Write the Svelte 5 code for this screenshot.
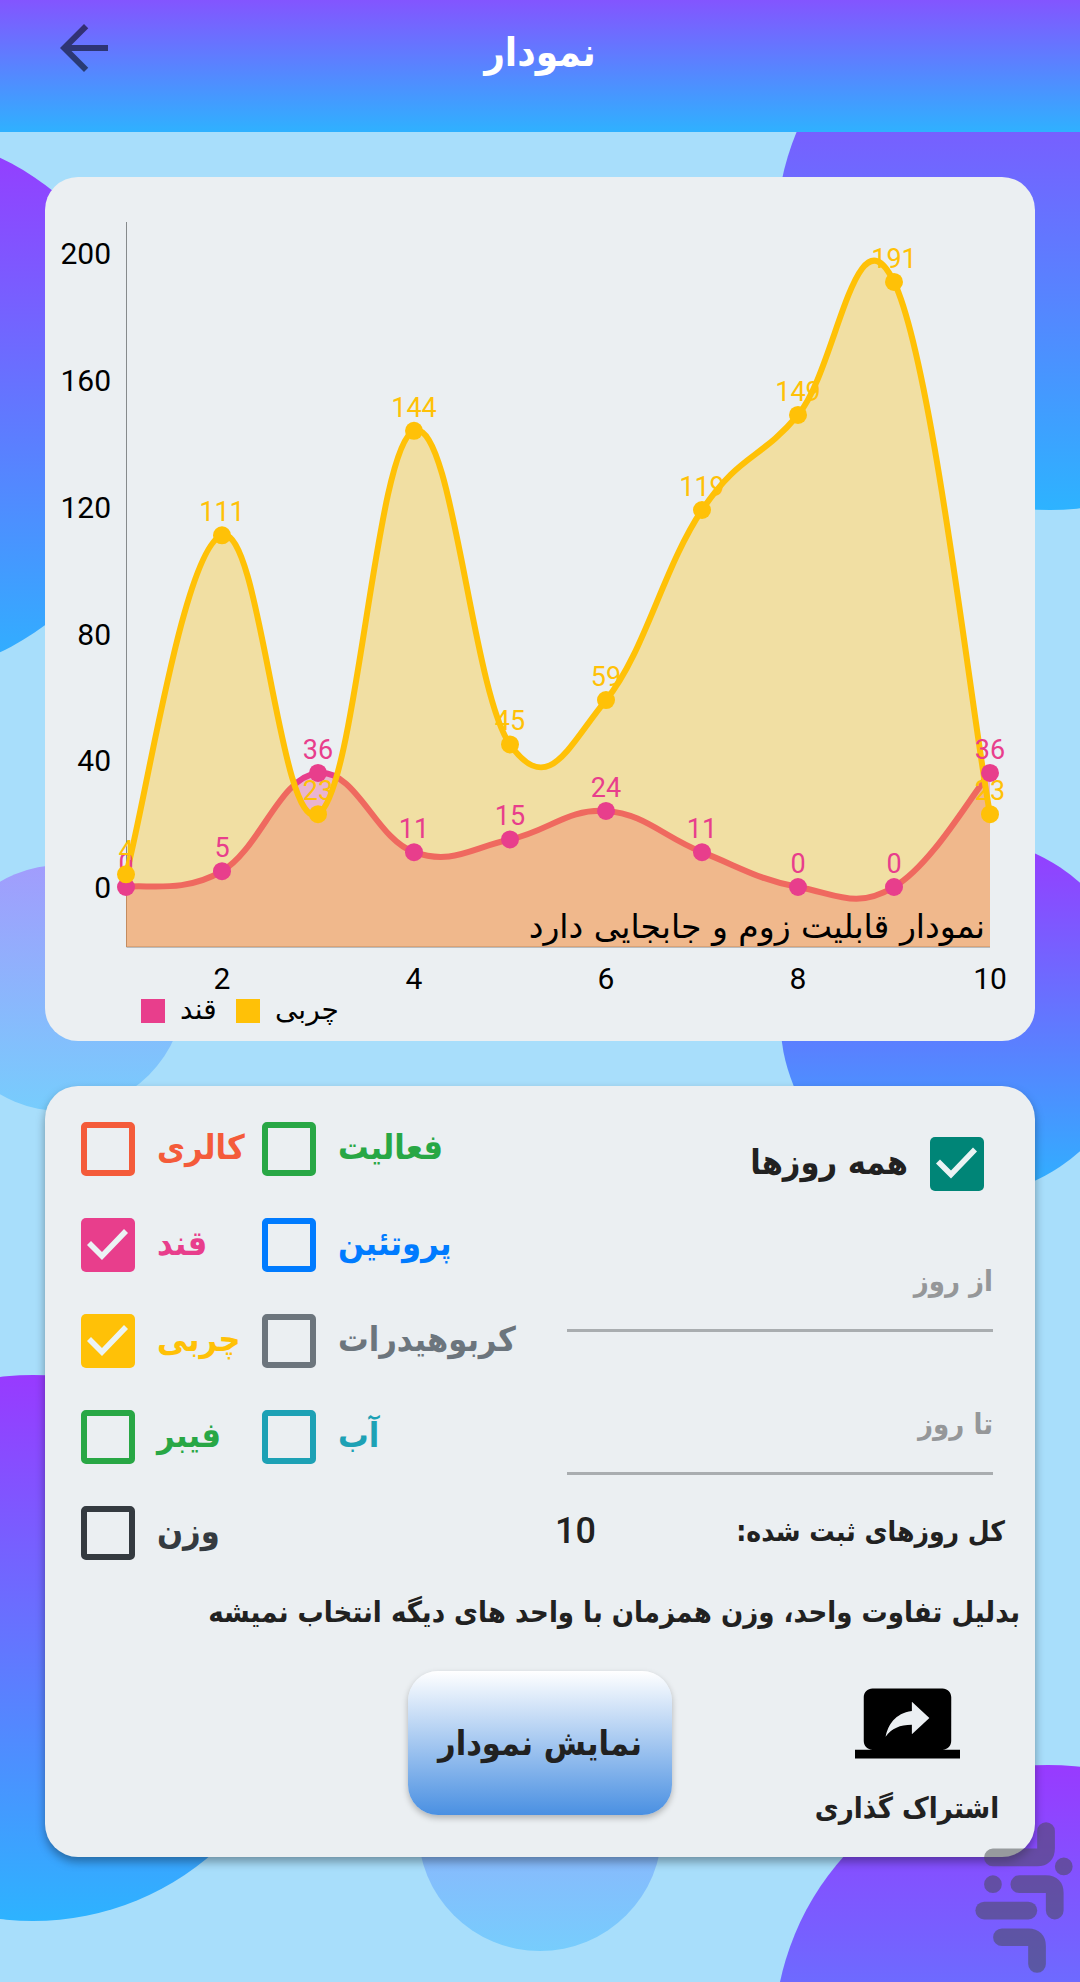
<script>
	let nutrients = $state([
		{ id: 'calorie', label: 'کالری', color: '#f45b3a', checked: false },
		{ id: 'activity', label: 'فعالیت', color: '#28a745', checked: false },
		{ id: 'sugar', label: 'قند', color: '#e83e8c', checked: true },
		{ id: 'protein', label: 'پروتئین', color: '#007bff', checked: false },
		{ id: 'fat', label: 'چربی', color: '#ffc107', checked: true },
		{ id: 'carbs', label: 'کربوهیدرات', color: '#6c757d', checked: false },
		{ id: 'fiber', label: 'فیبر', color: '#28a745', checked: false },
		{ id: 'water', label: 'آب', color: '#1da1b5', checked: false },
		{ id: 'weight', label: 'وزن', color: '#343a40', checked: false }
	]);
	let allDays = $state(true);
	let fromDay = $state('');
	let toDay = $state('');

	const series = [
		{ name: 'قند', color: '#e83e8c', values: [0, 5, 36, 11, 15, 24, 11, 0, 0, 36], legendX: 96 },
		{ name: 'چربی', color: '#ffc107', values: [4, 111, 23, 144, 45, 59, 119, 149, 191, 23], legendX: 191 }
	];

	// plot area inside the 990 x 864 viewBox
	const left = 81;
	const right = 945;
	const top = 45;
	const bottom = 770;
	const zero = 710;
	const unit = 3.168;

	const yTicks = [0, 40, 80, 120, 160, 200];
	const xTicks = [2, 4, 6, 8, 10];

	const px = (day) => left + (day - 1) * 96;
	const py = (value) => zero - value * unit;

	// cubic line, every point pulls its handles towards its neighbours
	function linePath(values) {
		const p = values.map((v, i) => [px(i + 1), py(v)]);
		const at = (i) => p[Math.max(0, Math.min(p.length - 1, i))];
		const slope = (i) => [(at(i + 1)[0] - at(i - 1)[0]) * 0.2, (at(i + 1)[1] - at(i - 1)[1]) * 0.2];
		let d = `M${p[0]}`;
		for (let i = 1; i < p.length; i++) {
			const a = slope(i - 1);
			const b = slope(i);
			d += `C${p[i - 1][0] + a[0]},${p[i - 1][1] + a[1]} ${p[i][0] - b[0]},${p[i][1] - b[1]} ${p[i]}`;
		}
		return d;
	}
</script>

<div class="page">
	<svg class="backdrop" viewBox="0 0 1080 1982" preserveAspectRatio="xMidYMin slice" aria-hidden="true">
		<defs>
			<linearGradient id="bubble" x1="0" y1="0" x2="0" y2="1">
				<stop offset="0" stop-color="#983aff" />
				<stop offset="1" stop-color="#2db3ff" />
			</linearGradient>
		</defs>
		<g fill="url(#bubble)">
			<circle cx="-118" cy="405" r="274" />
			<circle cx="1050" cy="236" r="274" />
			<circle cx="62" cy="988" r="123" opacity="0.4" />
			<circle cx="960" cy="1017" r="180" />
			<circle cx="33" cy="1648" r="273" />
			<circle cx="540" cy="1829" r="122" opacity="0.4" />
			<circle cx="1048" cy="2039" r="274" />
		</g>
	</svg>

	<header>
		<button class="back" aria-label="بازگشت">
			<svg viewBox="0 0 24 24"><path d="M20 11H7.83l5.59-5.59L12 4l-8 8 8 8 1.41-1.41L7.83 13H20v-2z" /></svg>
		</button>
		<h1>نمودار</h1>
	</header>

	<main>
		<section class="card">
			<svg class="chart" viewBox="0 0 990 864" role="img" aria-label="نمودار">
				<path class="axis" d="M{left + 0.5} {top}V{bottom}H{right}" />

				{#each series as s}
					<path d="{linePath(s.values)}L{right},{bottom}L{left},{bottom}Z" fill={s.color} fill-opacity="0.333" />
					<path d={linePath(s.values)} fill="none" stroke={s.color} stroke-width="6" />
				{/each}

				{#each series as s}
					{#each s.values as v, i}
						<text class="value" x={px(i + 1)} y={py(v) - 14} fill={s.color}>{v}</text>
					{/each}
				{/each}

				{#each series as s}
					{#each s.values as v, i}
						<circle cx={px(i + 1)} cy={py(v)} r="9" fill={s.color} />
					{/each}
				{/each}

				{#each yTicks as t}
					<text class="tick y" x="66" y={py(t) + 11}>{t}</text>
				{/each}
				{#each xTicks as t}
					<text class="tick x" x={px(t)} y="812">{t}</text>
				{/each}

				{#each series as s}
					<rect x={s.legendX} y="822" width="24" height="24" fill={s.color} />
					<text class="legend" x={s.legendX + 39} y="842">{s.name}</text>
				{/each}
				<text class="description" x="940" y="761">نمودار قابلیت زوم و جابجایی دارد</text>
			</svg>
		</section>

		<section class="card panel">
			<div class="fields">
				<div class="nutrients">
					{#each nutrients as n}
						<label style="--color: {n.color}">
							<input type="checkbox" id={n.id} bind:checked={n.checked} />
							<span>{n.label}</span>
						</label>
					{/each}
				</div>

				<div class="days">
					<label class="all-days">
						<input type="checkbox" bind:checked={allDays} />
						<span>همه روزها</span>
					</label>
					<input class="day" type="text" placeholder="از روز" aria-label="از روز" bind:value={fromDay} />
					<input class="day" type="text" placeholder="تا روز" aria-label="تا روز" bind:value={toDay} />
					<div class="total">
						<span>کل روزهای ثبت شده:</span>
						<span class="count">10</span>
					</div>
				</div>
			</div>

			<p class="note">بدلیل تفاوت واحد، وزن همزمان با واحد های دیگه انتخاب نمیشه</p>

			<div class="actions">
				<button class="show">نمایش نمودار</button>
				<button class="share">
					<svg viewBox="0 0 24 24"><path d="M20 18c1.1 0 1.99-.9 1.99-2L22 6c0-1.11-.9-2-2-2H4c-1.11 0-2 .89-2 2v10c0 1.1.89 2 2 2H0v2h24v-2h-4zm-7-3.53v-2.19c-2.78 0-4.61.85-6 2.72.56-2.67 2.11-5.33 6-5.87V7l4 3.73-4 3.74z" /></svg>
					<span>اشتراک گذاری</span>
				</button>
			</div>
		</section>
	</main>

	<svg class="watermark" viewBox="108 95 292 452" aria-hidden="true">
		<g fill="none" stroke="#464a4c" stroke-width="53" stroke-linecap="round">
			<path d="M161 201H293Q320 201 320 174V122" />
			<path d="M373 228h.1M161 281h.1" />
			<path d="M240 281H320Q346 281 346 307V360" />
			<path d="M135 360H267" />
			<path d="M188 440H267Q293 440 293 466V520" />
		</g>
	</svg>
</div>

<style>
	:global(body) {
		margin: 0;
	}

	.page {
		position: relative;
		min-height: 100vh;
		overflow: hidden;
		background: #a8defb;
		color: #212121;
		font-family: "DejaVu Sans Condensed", "DejaVu Sans", sans-serif;
		font-weight: bold;
	}

	.backdrop {
		position: absolute;
		inset: 0;
		width: 100%;
		height: 100%;
	}

	button,
	input {
		font: inherit;
		color: inherit;
	}

	button {
		border: 0;
		padding: 0;
		background: none;
		cursor: pointer;
	}

	header {
		position: relative;
		display: grid;
		grid-template-columns: 72px 1fr 72px;
		align-items: start;
		padding: 12px 48px 40px;
		background: linear-gradient(#8355ff, #2fb1ff);
	}

	.back svg {
		display: block;
		width: 72px;
		height: 72px;
		fill: #000;
		opacity: 0.54;
	}

	h1 {
		margin: 0;
		color: #fff;
		font-size: 40px;
		line-height: 80px;
		text-align: center;
	}

	main {
		position: relative;
		display: flex;
		flex-direction: column;
		gap: 45px;
		padding: 45px 45px 125px;
	}

	.card {
		border-radius: 33px;
		background: #ebeff2;
	}

	/* chart */
	.chart {
		display: block;
		width: 100%;
		height: auto;
		font-family: "DejaVu Sans", sans-serif;
		font-weight: normal;
	}

	.axis {
		fill: none;
		stroke: #868a8c;
		stroke-width: 1;
	}

	.value,
	.tick {
		font-family: Roboto, sans-serif;
	}

	.value {
		font-size: 27px;
		text-anchor: middle;
	}

	.tick {
		font-size: 30px;
	}

	.tick.y {
		text-anchor: end;
	}

	.tick.x {
		text-anchor: middle;
	}

	.legend {
		font-size: 28px;
	}

	.description {
		font-size: 33px;
		text-anchor: end;
	}

	/* panel */
	.panel {
		padding-bottom: 17px;
		box-shadow: 0 5px 10px rgba(0, 0, 0, 0.35);
	}

	.fields {
		display: grid;
		grid-template-columns: 1fr 450px;
		padding: 36px 30px 0 36px;
	}

	.nutrients {
		display: grid;
		grid-template-columns: 181px 1fr;
		grid-auto-rows: 54px;
		row-gap: 42px;
	}

	label {
		--color: #008577;
		display: flex;
		align-items: center;
		gap: 22px;
		font-size: 34px;
		white-space: nowrap;
	}

	label span {
		padding-bottom: 4px;
	}

	.nutrients span {
		color: var(--color);
	}

	input[type="checkbox"] {
		flex: none;
		appearance: none;
		box-sizing: border-box;
		width: 54px;
		height: 54px;
		margin: 0;
		border: 6px solid var(--color);
		border-radius: 5px;
	}

	input[type="checkbox"]:checked {
		border: 0;
		background: var(--color);
	}

	input[type="checkbox"]:checked::after {
		content: "";
		display: block;
		width: 54px;
		height: 54px;
		background: #ebf3f4;
		clip-path: polygon(6px 27px, 10px 23px, 21px 34px, 43px 11px, 47px 15px, 21px 42px);
	}

	.days {
		display: flex;
		flex-direction: column;
		gap: 44px;
		padding-top: 16px;
		direction: rtl;
	}

	.all-days {
		height: 51px;
		padding-right: 21px;
	}

	.day {
		box-sizing: border-box;
		height: 99px;
		margin: 0 12px;
		padding: 0;
		border: 0;
		border-bottom: 3px solid #a9adb0;
		background: none;
		font-size: 29px;
		outline: none;
	}

	.day::placeholder {
		color: #959799;
		opacity: 1;
	}

	.total {
		display: flex;
		align-items: center;
		justify-content: space-between;
		height: 24px;
		font-size: 28px;
	}

	.count {
		font-family: Roboto, sans-serif;
		font-size: 36px;
		font-weight: 500;
	}

	.note {
		margin: 28px 15px 35px;
		direction: rtl;
		font-size: 29px;
		line-height: 48px;
	}

	.actions {
		display: grid;
		grid-template-columns: 1fr 264px 1fr;
		align-items: start;
	}

	.show {
		grid-column: 2;
		height: 144px;
		border-radius: 30px;
		background: linear-gradient(#fff, #4a90e2);
		box-shadow: 0 3px 6px rgba(0, 0, 0, 0.25);
		font-size: 34px;
	}

	.share {
		justify-self: end;
		width: 190px;
		margin-right: 33px;
		font-size: 29px;
		line-height: 64px;
		white-space: nowrap;
	}

	.share svg {
		display: block;
		width: 105px;
		height: 105px;
		margin: 0 auto;
		fill: #000;
	}

	.watermark {
		position: absolute;
		right: 7px;
		bottom: 9px;
		width: 98px;
		height: 151px;
		opacity: 0.5;
	}
</style>
